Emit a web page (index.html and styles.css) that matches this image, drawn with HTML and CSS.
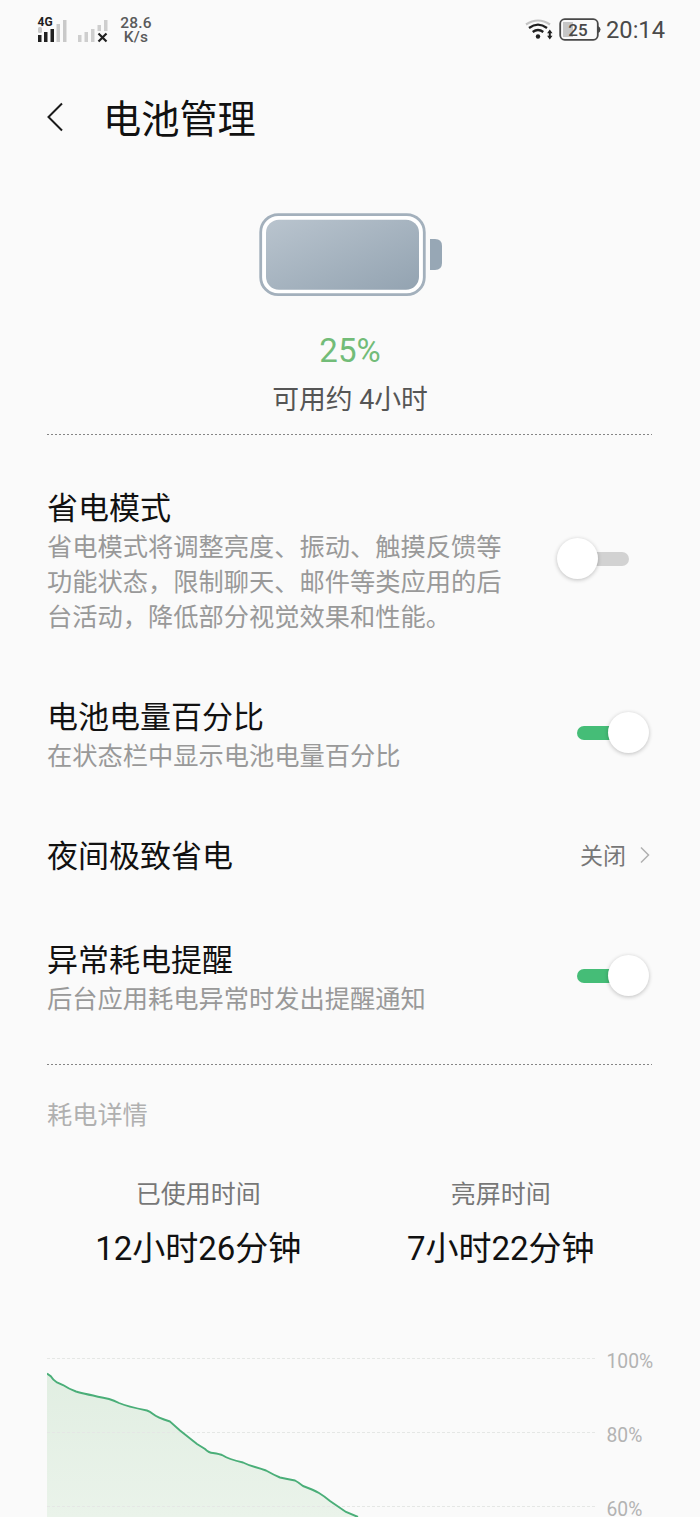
FILE: index.html
```html
<!DOCTYPE html>
<html lang="zh-CN">
<head>
<meta charset="utf-8">
<title>电池管理</title>
<link rel="stylesheet" href="styles.css">
</head>
<body>
<div class="status">
  <svg class="signals" width="72" height="30" viewBox="0 0 72 30">
    <g fill="#c9c9c9"><rect x="1" y="12" width="4" height="6" rx="1.500"/><rect x="19.500" y="9" width="3.500" height="18"/><rect x="26" y="5" width="3.500" height="22"/></g>
    <g fill="#202020"><rect x="1" y="20" width="3.500" height="7"/><rect x="7" y="17" width="3.500" height="10"/><rect x="13.500" y="14" width="3.500" height="13"/></g>
    <text class="net" x="0.500" y="10.800">4G</text>
    <g fill="#cecece"><rect x="41" y="20" width="3.500" height="7"/><rect x="47.500" y="17" width="3.500" height="10"/><rect x="54" y="14" width="3.500" height="13"/><rect x="60.500" y="10" width="3.500" height="6"/><rect x="67" y="5" width="3.500" height="11"/></g>
    <path d="M61.500 18.500l8 8M69.500 18.500l-8 8" stroke="#202020" stroke-width="2.200"/>
  </svg>
  <div class="speed">28.6<br>K/s</div>
  <svg class="wifi" width="28" height="22" viewBox="0 0 28 22" fill="none">
    <path d="M1 5.500Q13 -2.500 25 5.500" stroke="#c4c4c4" stroke-width="2.200"/>
    <path d="M4 9Q13 2.300 22 9M7.700 13Q13 9 18.300 13" stroke="#202020" stroke-width="2.300"/>
    <circle cx="13" cy="17.500" r="2.200" fill="#202020"/>
    <path d="M24.800 10.500l2.700 3.700h-1.700v2.500h1.700l-2.700 3.700-2.700-3.700h1.700v-2.500h-1.700z" fill="#202020"/>
  </svg>
  <svg class="cell" width="42" height="24" viewBox="0 0 42 24">
    <rect x="4" y="4" width="10" height="15" fill="#c6c6c6"/>
    <rect x="1.200" y="1.200" width="37.600" height="20.600" rx="4.500" fill="none" stroke="#484848" stroke-width="1.800"/>
    <path d="M39 8q2.500 1 2.500 3.500T39 15z" fill="#484848"/>
    <text class="cell-text" x="19" y="17.600" text-anchor="middle">25</text>
  </svg>
  <div class="clock">20:14</div>
</div>

<header class="header">
  <svg width="18" height="30" viewBox="0 0 18 30"><path d="M16 1.500L2.500 15 16 28.500" fill="none" stroke="#1a1a1a" stroke-width="2"/></svg>
  <h1>电池管理</h1>
</header>

<section class="summary">
  <svg class="battery" width="184" height="84" viewBox="0 0 184 84">
    <defs><linearGradient id="fill" x1="0" y1="0" x2="1" y2="1"><stop offset="0" stop-color="#b9c4ce"/><stop offset="1" stop-color="#93a3b1"/></linearGradient></defs>
    <rect x="1.700" y="1.700" width="163.600" height="80" rx="17.500" fill="#fff" stroke="#a3b0bc" stroke-width="2.800"/>
    <rect x="7" y="6.800" width="153" height="70" rx="13" fill="url(#fill)"/>
    <path d="M171 26h5q7 0 7 7v17q0 7-7 7h-5z" fill="#97a7b5"/>
  </svg>
  <div class="percent">25%</div>
  <div class="remain">可用约 4小时</div>
</section>
<div class="dots"></div>

<main class="settings">
  <section class="row saver">
    <div><h2>省电模式</h2><p>省电模式将调整亮度、振动、触摸反馈等<br>功能状态，限制聊天、邮件等类应用的后<br>台活动，降低部分视觉效果和性能。</p></div>
    <div class="toggle"><i></i></div>
  </section>
  <section class="row percentage">
    <div><h2>电池电量百分比</h2><p>在状态栏中显示电池电量百分比</p></div>
    <div class="toggle on"><i></i></div>
  </section>
  <section class="row night">
    <h2>夜间极致省电</h2>
    <div class="value">关闭<svg width="12" height="18" viewBox="0 0 12 18"><path d="M2 1.500L9.500 9 2 16.500" fill="none" stroke="#b0b0b0" stroke-width="1.500"/></svg></div>
  </section>
  <section class="row alert">
    <div><h2>异常耗电提醒</h2><p>后台应用耗电异常时发出提醒通知</p></div>
    <div class="toggle on"><i></i></div>
  </section>
</main>
<div class="dots"></div>

<section class="details">
  <h3>耗电详情</h3>
  <div class="stats">
    <div><span>已使用时间</span><b>12小时26分钟</b></div>
    <div><span>亮屏时间</span><b>7小时22分钟</b></div>
  </div>
  <div class="chart">
    <svg width="549" height="177" viewBox="0 0 549 177">
      <defs><linearGradient id="area" x1="0" y1="0" x2="0" y2="1"><stop offset="0" stop-color="#e1eee2"/><stop offset="1" stop-color="#eaf3ea"/></linearGradient></defs>
      <path d="M0 33.500L4 36.500 8 41.500 16 45 24 49.500 35 53 62 59 72 63 82 66.500 100 70.500 112 77.500 123 81.500 133 90.500 150 104 162 112 173 115 184 119.500 196 122.500 208 127 219 130.500 233 137.500 248 140.500 256 146 272 153 283 161 299 172 311 177H0z" fill="url(#area)"/>
      <path d="M0 18.500H549M0 92.500H549M0 166.500H549" stroke="#e5e7e5" stroke-width="1" stroke-dasharray="3 2"/>
      <path d="M0 33.500L4 36.500Q6 40 10 42.500L16 45Q22 49 29 51.500Q38 54 62 59Q67 60.500 72 63Q80 66.500 100 70.500Q103 71.500 106 74Q110 77.500 123 81.500Q128 86 133 90.500L150 104 158 109Q162 113 166 113Q173 114 176 115.500Q181 119 196 122.500Q202 125.500 208 127Q215 129 219 130.500Q227 135 233 137.500Q240 139 248 140.500Q251 142 256 146Q267 150 272 153Q277 156 283 161L299 172 311 177" fill="none" stroke="#4aae78" stroke-width="1.900"/>
    </svg>
    <div class="axis"><span>100%</span><span>80%</span><span>60%</span></div>
  </div>
</section>
</body>
</html>
```
FILE: styles.css
```css
* { box-sizing: border-box; }
body {
  margin: 0; width: 700px; height: 1517px; overflow: hidden;
  background: #fafafa; color: #111;
  font-family: Roboto, "Noto Sans CJK SC", sans-serif; font-weight: 400;
}
svg { display: block; flex: none; }
h1, h2, h3, p { margin: 0; font-weight: 400; }

.status { display: flex; height: 60px; padding: 15px 0 0 37px; color: #4a4a4a; }
.net { font: 700 12px Roboto, sans-serif; fill: #202020; }
.speed { margin: 1px 0 0 10px; width: 34px; font-size: 15.5px; font-weight: 500; line-height: 14px; text-align: center; color: #5a5a5a; letter-spacing: .2px; }
.wifi { margin: 4px 0 0 372px; overflow: visible; }
.cell { margin: 3px 0 0 6px; }
.cell-text { font: 500 17px Roboto, sans-serif; fill: #484848; }
.clock { margin-left: 5px; font-size: 23.7px; line-height: 31px; }

.header { display: flex; align-items: center; height: 120px; padding-left: 46px; }
.header svg { margin-bottom: 6px; }
.header h1 { margin-left: 39px; font-size: 38.2px; line-height: 50px; }

.summary { display: flex; flex-direction: column; align-items: center; height: 255px; padding-top: 33px; }
.battery { margin-left: 2px; }
.percent { margin-top: 34px; font-size: 33px; line-height: 40px; color: #72bc78; }
.remain { margin-top: 9px; font-size: 26.8px; line-height: 40px; color: #555; }
.dots { width: 605px; height: 1px; margin: 0 0 1px 47px; background: repeating-linear-gradient(90deg, #858585 0 2px, transparent 2px 4px); }
.summary + .dots { margin-top: -1px; }

.settings { height: 628px; padding: 53px 51px 0 47px; }
.row { display: flex; justify-content: space-between; align-items: flex-start; }
.row h2 { font-size: 31px; line-height: 40px; }
.row p { margin-top: 1px; font-size: 25.25px; line-height: 35px; color: #999; white-space: nowrap; }
.saver { height: 209px; }
.percentage { height: 139px; }
.night { height: 104px; }
.toggle { display: flex; align-items: center; width: 92px; height: 41px; margin-top: 14px; }
.saver .toggle { margin-top: 49px; }
.toggle::before { content: ""; width: 52px; height: 14px; margin-left: 20px; border-radius: 7px; background: #d2d2d2; }
.toggle.on::before { background: #45bd77; }
.toggle i { width: 41px; height: 41px; margin-left: -72px; border-radius: 50%; background: #fff; box-shadow: 0 1px 4px rgba(0,0,0,.24); }
.toggle.on i { margin-left: -21px; }
.value { display: flex; align-items: center; gap: 13px; margin-right: -2px; font-size: 23px; line-height: 40px; color: #777; }
.value svg { margin-bottom: 4px; }

.details { padding: 30px 0 0 47px; }
.details h3 { font-size: 25.2px; line-height: 40px; color: #b0b0b0; }
.stats { display: flex; width: 605px; height: 204px; padding-top: 40px; }
.stats div { flex: 1; display: flex; flex-direction: column; align-items: center; }
.stats span { font-size: 25px; line-height: 38px; color: #777; }
.stats b { margin-top: 15px; font-size: 33px; line-height: 40px; font-weight: 400; }
.chart { display: flex; height: 177px; }
.axis { display: flex; flex-direction: column; margin-left: 10.5px; padding-top: 7px; }
.axis span { flex: none; height: 74px; font-size: 19.3px; line-height: 30px; color: #b3b3b3; }
```
